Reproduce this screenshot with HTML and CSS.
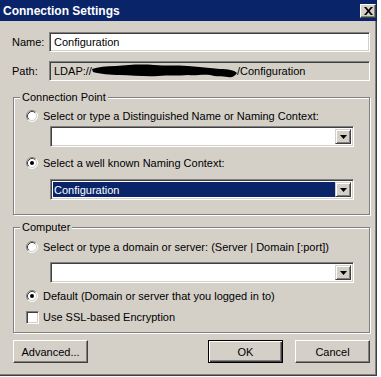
FILE: index.html
```html
<!DOCTYPE html>
<html>
<head>
<meta charset="utf-8">
<link rel="stylesheet" href="styles.css">
</head>
<body>
<div class="window">
  <div class="titlebar">
    <span class="title">Connection Settings</span>
    <span class="close"><svg width="9" height="8" viewBox="0 0 9 8"><path d="M0 0h2.2l2.3 2.7L6.8 0H9L5.6 4 9 8H6.8L4.5 5.3 2.2 8H0l3.4-4z" fill="#000"/></svg></span>
  </div>
  <div class="content">
    <div class="row name-row">
      <span class="lbl">Name:</span>
      <div class="field edit"><span class="ftext">Configuration</span></div>
    </div>
    <div class="row path-row">
      <span class="lbl">Path:</span>
      <div class="field readonly">
        <span class="ftext">LDAP://</span><svg class="redact" width="145" height="15" viewBox="0 0 145 15"><path d="M0 5 C6 3 14 2 24 2 C36 1 48 0 62 1 C74 2 84 1 96 2 C108 3 118 4 128 5 C136 5 142 6 145 9 C143 12 140 14 136 13 C130 12 124 13 118 11 C110 10 104 12 96 11 C86 12 76 11 66 12 C54 13 40 11 28 11 C18 11 8 10 1 8 Z" fill="#000"/></svg><span class="ftext2">/Configuration</span>
      </div>
    </div>

    <div class="group g1">
      <div class="legend">Connection Point</div>
      <div class="opt opt1">
        <svg class="radio" width="12" height="12" viewBox="0 0 12 12"><circle cx="6" cy="6" r="5" fill="#fff"/><path d="M2.11 9.89 A5.5 5.5 0 0 1 9.89 2.11" fill="none" stroke="#808080"/><path d="M9.89 2.11 A5.5 5.5 0 0 1 2.11 9.89" fill="none" stroke="#fff"/><path d="M2.82 9.18 A4.5 4.5 0 0 1 9.18 2.82" fill="none" stroke="#404040"/><path d="M9.18 2.82 A4.5 4.5 0 0 1 2.82 9.18" fill="none" stroke="#d4d0c8"/></svg>
        <span>Select or type a Distinguished Name or Naming Context:</span>
      </div>
      <div class="combo c1"><div class="combo-text"></div><div class="arrow"><svg width="7" height="4" viewBox="0 0 7 4"><path d="M0 0h7L3.5 4z" fill="#000"/></svg></div></div>
      <div class="opt opt2">
        <svg class="radio" width="12" height="12" viewBox="0 0 12 12"><circle cx="6" cy="6" r="5" fill="#fff"/><path d="M2.11 9.89 A5.5 5.5 0 0 1 9.89 2.11" fill="none" stroke="#808080"/><path d="M9.89 2.11 A5.5 5.5 0 0 1 2.11 9.89" fill="none" stroke="#fff"/><path d="M2.82 9.18 A4.5 4.5 0 0 1 9.18 2.82" fill="none" stroke="#404040"/><path d="M9.18 2.82 A4.5 4.5 0 0 1 2.82 9.18" fill="none" stroke="#d4d0c8"/><circle cx="6" cy="6" r="2" fill="#000"/></svg>
        <span>Select a well known Naming Context:</span>
      </div>
      <div class="combo c2"><div class="combo-text sel">Configuration</div><div class="arrow"><svg width="7" height="4" viewBox="0 0 7 4"><path d="M0 0h7L3.5 4z" fill="#000"/></svg></div></div>
    </div>

    <div class="group g2">
      <div class="legend">Computer</div>
      <div class="opt opt3">
        <svg class="radio" width="12" height="12" viewBox="0 0 12 12"><circle cx="6" cy="6" r="5" fill="#fff"/><path d="M2.11 9.89 A5.5 5.5 0 0 1 9.89 2.11" fill="none" stroke="#808080"/><path d="M9.89 2.11 A5.5 5.5 0 0 1 2.11 9.89" fill="none" stroke="#fff"/><path d="M2.82 9.18 A4.5 4.5 0 0 1 9.18 2.82" fill="none" stroke="#404040"/><path d="M9.18 2.82 A4.5 4.5 0 0 1 2.82 9.18" fill="none" stroke="#d4d0c8"/></svg>
        <span>Select or type a domain or server: (Server | Domain [:port])</span>
      </div>
      <div class="combo c3"><div class="combo-text"></div><div class="arrow"><svg width="7" height="4" viewBox="0 0 7 4"><path d="M0 0h7L3.5 4z" fill="#000"/></svg></div></div>
      <div class="opt opt4">
        <svg class="radio" width="12" height="12" viewBox="0 0 12 12"><circle cx="6" cy="6" r="5" fill="#fff"/><path d="M2.11 9.89 A5.5 5.5 0 0 1 9.89 2.11" fill="none" stroke="#808080"/><path d="M9.89 2.11 A5.5 5.5 0 0 1 2.11 9.89" fill="none" stroke="#fff"/><path d="M2.82 9.18 A4.5 4.5 0 0 1 9.18 2.82" fill="none" stroke="#404040"/><path d="M9.18 2.82 A4.5 4.5 0 0 1 2.82 9.18" fill="none" stroke="#d4d0c8"/><circle cx="6" cy="6" r="2" fill="#000"/></svg>
        <span>Default (Domain or server that you logged in to)</span>
      </div>
      <div class="opt opt5">
        <span class="check"></span>
        <span>Use SSL-based Encryption</span>
      </div>
    </div>

    <div class="buttons">
      <div class="btn">Advanced...</div>
      <div class="btn-group">
        <div class="btn default">OK</div>
        <div class="btn">Cancel</div>
      </div>
    </div>
  </div>
</div>
</body>
</html>
```

FILE: styles.css
```css
html, body {
  margin: 0;
  padding: 0;
  background: #ffffff;
}

body {
  font-family: "Liberation Sans", Arial, sans-serif;
  font-size: 11px;
  color: #000;
}

.window {
  width: 377px;
  height: 376px;
  background: #d4d0c8;
  box-shadow: inset -1px -1px 0 #404040, inset -2px -2px 0 #808080;
  box-sizing: border-box;
}

.titlebar {
  height: 21px;
  background: #0a246a;
  display: flex;
  align-items: center;
  justify-content: space-between;
  padding: 0 0 0 3px;
}

.title {
  color: #fff;
  font-weight: bold;
  font-size: 12px;
}

.close {
  width: 16px;
  height: 14px;
  box-sizing: border-box;
  background: #d4d0c8;
  border: 1px solid;
  border-color: #fff #404040 #404040 #fff;
  box-shadow: inset -1px -1px 0 #808080;
  display: flex;
  align-items: center;
  justify-content: center;
  margin-right: 1px;
}

.content {
  padding: 0 7px 0 13px;
}

.row {
  display: flex;
  align-items: center;
}

.lbl {
  width: 37px;
  margin-left: -1px;
}

.name-row {
  margin-top: 11px;
}

.path-row {
  margin-top: 9px;
}

.field {
  flex: 1;
  height: 20px;
  box-sizing: border-box;
  border: 1px solid;
  border-color: #808080 #fff #fff #808080;
  box-shadow: inset 1px 1px 0 #404040, inset -1px -1px 0 #d4d0c8;
  display: flex;
  align-items: center;
  padding-left: 4px;
  white-space: nowrap;
}

.edit {
  background: #fff;
}

.readonly {
  background: #d4d0c8;
}

.redact {
  display: block;
  margin-top: 1px;
}

.group {
  border: 1px solid #808080;
  box-shadow: 1px 1px 0 #fff, inset 1px 1px 0 #fff;
  position: relative;
}

.g1 {
  margin-top: 16px;
  padding-bottom: 14px;
}

.g2 {
  margin-top: 12px;
  padding-bottom: 8px;
}

.legend {
  margin-top: -7px;
  margin-left: 6px;
  padding: 0 2px;
  width: fit-content;
  background: #d4d0c8;
  line-height: 13px;
  height: 13px;
}

.opt {
  display: flex;
  align-items: center;
  height: 14px;
  padding-left: 12px;
  white-space: nowrap;
}

.opt span:last-child {
  margin-left: 5px;
}

.radio {
  display: block;
  flex: none;
}

.opt1 { margin-top: 5px; }
.opt2 { margin-top: 9px; }
.opt3 { margin-top: 6px; }
.opt4 { margin-top: 6px; }
.opt5 { margin-top: 7px; }

.check {
  width: 13px;
  height: 13px;
  box-sizing: border-box;
  background: #fff;
  border: 1px solid;
  border-color: #808080 #fff #fff #808080;
  box-shadow: inset 1px 1px 0 #404040, inset -1px -1px 0 #d4d0c8;
  flex: none;
}

.opt5 span:last-child {
  margin-left: 4px;
}

.combo {
  margin-left: 36px;
  width: 304px;
  height: 21px;
  box-sizing: border-box;
  background: #fff;
  border: 1px solid;
  border-color: #808080 #fff #fff #808080;
  box-shadow: inset 1px 1px 0 #404040, inset -1px -1px 0 #d4d0c8;
  display: flex;
  padding: 2px;
}

.c1 { margin-top: 3px; }
.c2 { margin-top: 9px; }
.c3 { margin-top: 8px; }

.combo-text {
  flex: 1;
  display: flex;
  align-items: center;
  padding-left: 1px;
}

.combo-text.sel {
  background: #0a246a;
  color: #fff;
}

.arrow {
  width: 16px;
  box-sizing: border-box;
  background: #d4d0c8;
  border: 1px solid;
  border-color: #d4d0c8 #404040 #404040 #d4d0c8;
  box-shadow: inset 1px 1px 0 #fff, inset -1px -1px 0 #808080;
  display: flex;
  align-items: center;
  justify-content: center;
}

.arrow svg {
  display: block;
}

.buttons {
  margin-top: 7px;
  display: flex;
  justify-content: space-between;
}

.btn-group {
  display: flex;
  gap: 12px;
}

.btn {
  width: 75px;
  height: 23px;
  box-sizing: border-box;
  border: 1px solid;
  border-color: #fff #404040 #404040 #fff;
  box-shadow: inset -1px -1px 0 #808080;
  display: flex;
  align-items: center;
  justify-content: center;
}

.btn.default {
  border: 1px solid #000;
  box-shadow: inset 1px 1px 0 #fff, inset -1px -1px 0 #404040, inset -2px -2px 0 #808080;
}
```
